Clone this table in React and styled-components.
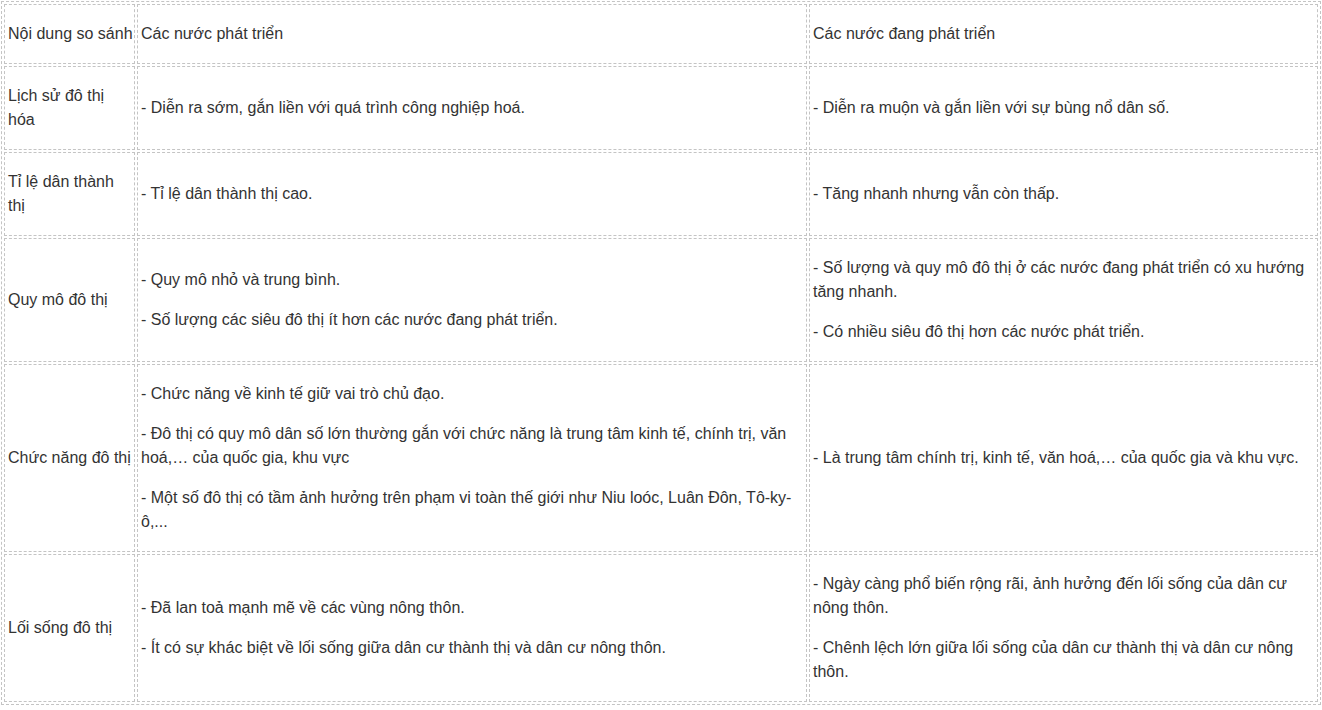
import React from "react";
import styled, { createGlobalStyle } from "styled-components";

const Global = createGlobalStyle`
  html, body { margin: 0; padding: 0; background: #fff; }
  body { font-family: "Liberation Sans", Arial, sans-serif; color: #333; }
`;

const Table = styled.table`
  margin: 1px;
  width: 1320px;
  table-layout: fixed;
  border-collapse: separate;
  border-spacing: 2px;
  border: 1px dashed #c4c4c4;
  font-size: 16px;
  line-height: 24px;
  color: #333;
`;

const Cell = styled.td`
  box-sizing: border-box;
  width: ${(p) => p.$w}px;
  border: 1px dashed #c4c4c4;
  padding: 17px 1px 17px 3px;
  vertical-align: middle;
  text-align: left;
  font-weight: normal;
`;

const Para = styled.p`
  margin: 0;
  & + & { margin-top: 16px; }
`;

const W = [131, 670, 509];

const rows = [
  ["Lịch sử đô thị hóa", ["- Diễn ra sớm, gắn liền với quá trình công nghiệp hoá."], ["- Diễn ra muộn và gắn liền với sự bùng nổ dân số."]],
  ["Tỉ lệ dân thành thị", ["- Tỉ lệ dân thành thị cao."], ["- Tăng nhanh nhưng vẫn còn thấp."]],
  ["Quy mô đô thị", ["- Quy mô nhỏ và trung bình.", "- Số lượng các siêu đô thị ít hơn các nước đang phát triển."], ["- Số lượng và quy mô đô thị ở các nước đang phát triển có xu hướng tăng nhanh.", "- Có nhiều siêu đô thị hơn các nước phát triển."]],
  ["Chức năng đô thị", ["- Chức năng về kinh tế giữ vai trò chủ đạo.", "- Đô thị có quy mô dân số lớn thường gắn với chức năng là trung tâm kinh tế, chính trị, văn hoá,… của quốc gia, khu vực", "- Một số đô thị có tầm ảnh hưởng trên phạm vi toàn thế giới như Niu loóc, Luân Đôn, Tô-ky-ô,..."], ["- Là trung tâm chính trị, kinh tế, văn hoá,… của quốc gia và khu vực."]],
  ["Lối sống đô thị", ["- Đã lan toả mạnh mẽ về các vùng nông thôn.", "- Ít có sự khác biệt về lối sống giữa dân cư thành thị và dân cư nông thôn."], ["- Ngày càng phổ biến rộng rãi, ảnh hưởng đến lối sống của dân cư nông thôn.", "- Chênh lệch lớn giữa lối sống của dân cư thành thị và dân cư nông thôn."]],
];

export default function App() {
  return (
    <>
      <Global />
      <Table>
        <tbody>
          <tr>
            <Cell $w={W[0]}>Nội dung so sánh</Cell>
            <Cell $w={W[1]}>Các nước phát triển</Cell>
            <Cell $w={W[2]}>Các nước đang phát triển</Cell>
          </tr>
          {rows.map(([h, a, b]) => (
            <tr key={h}>
              <Cell $w={W[0]}>{h}</Cell>
              <Cell $w={W[1]}>{a.map((t) => <Para key={t}>{t}</Para>)}</Cell>
              <Cell $w={W[2]}>{b.map((t) => <Para key={t}>{t}</Para>)}</Cell>
            </tr>
          ))}
        </tbody>
      </Table>
    </>
  );
}
